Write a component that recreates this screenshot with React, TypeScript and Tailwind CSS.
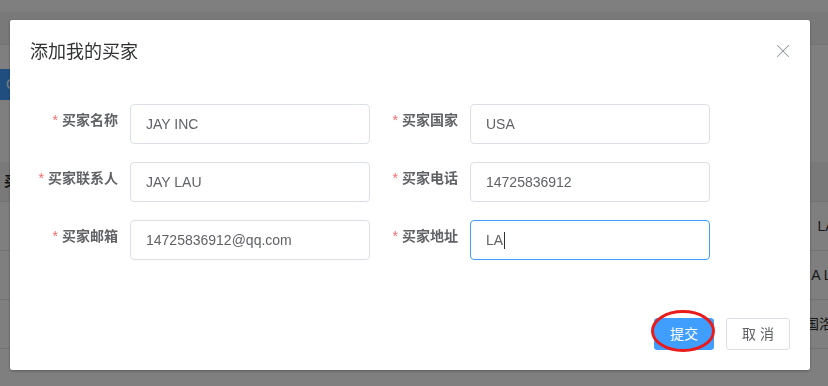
import { X } from 'lucide-react';

const font = { fontFamily: '"Liberation Sans", "Noto Sans CJK SC", sans-serif' };

export default function App() {
  const fields = [
    { label: '买家名称', value: 'JAY INC' },
    { label: '买家国家', value: 'USA' },
    { label: '买家联系人', value: 'JAY LAU' },
    { label: '买家电话', value: '14725836912' },
    { label: '买家邮箱', value: '14725836912@qq.com' },
    { label: '买家地址', value: 'LA', focused: true },
  ];

  const rows = ['LA', 'A LA', '美国洛杉矶'];

  return (
    <div className="relative min-h-screen w-full overflow-hidden bg-white text-[14px] text-[#303133]" style={font}>
      {/* page behind the dialog */}
      <div className="h-[12px] bg-white" />
      <div className="h-[33px] border-b border-[#e4e4e4] bg-[#f3f3f3]" />
      <div className="pt-[24px]">
        <div className="flex h-[31px] w-[80px] items-center rounded-r-[3px] bg-[#409eff] pl-[6px] text-white">Create</div>
      </div>
      <div className="mt-[62px]">
        <div className="flex h-[40px] items-center border-b border-[#e4e4e4] bg-[#f3f3f3] pl-[4px] font-bold text-[#222]">
          <span>买家</span>
        </div>
        {rows.map((r, i) => (
          <div key={i} className="flex h-[49px] items-center border-b border-[#e4e4e4] pl-[4px]">
            <span className="w-[782px] shrink-0" />
            <span className="w-[80px] shrink-0 whitespace-nowrap text-center">{r}</span>
          </div>
        ))}
      </div>

      {/* overlay */}
      <div className="fixed inset-0 bg-black/50" />

      {/* dialog */}
      <div className="fixed left-[10px] top-[20px] w-[800px] rounded-[2px] bg-white shadow-[0_1px_3px_rgba(0,0,0,0.3)]">
        <div className="relative px-5 pb-[10px] pt-5">
          <span className="text-[18px] leading-6 text-[#303133]">添加我的买家</span>
          <button className="absolute right-[16px] top-[20px] flex h-[22px] w-[22px] items-center justify-center text-[#909399]">
            <X className="h-[22px] w-[22px]" strokeWidth={1.1} />
          </button>
        </div>

        <div className="px-5 pb-[30px] pt-[30px]">
          <div className="grid grid-cols-[340px_340px]">
            {fields.map((f) => (
              <div key={f.label} className="mb-[18px] flex">
                <label className="w-[100px] shrink-0 whitespace-nowrap pr-3 text-right font-bold leading-[32px] text-[#606266]">
                  <span className="mr-1 font-normal text-[#f56c6c]">*</span>
                  {f.label}
                </label>
                <div
                  className={
                    f.focused
                      ? 'flex h-[40px] w-[240px] items-center rounded-[4px] border border-[#409eff] px-[15px] text-[#606266]'
                      : 'flex h-[40px] w-[240px] items-center rounded-[4px] border border-[#dcdfe6] px-[15px] text-[#606266]'
                  }
                >
                  {f.value}
                  {f.focused && <span className="ml-px h-[17px] w-px bg-[#303133]" />}
                </div>
              </div>
            ))}
          </div>
        </div>

        <div className="flex justify-end gap-3 px-5 pb-5 pt-[10px]">
          <div className="relative">
            <button className="h-[32px] rounded-[3px] border border-[#409eff] bg-[#409eff] px-[15px] text-[14px] text-white">提交</button>
            <svg className="pointer-events-none absolute -left-[3px] -top-[8px]" width="64" height="42" viewBox="0 0 64 42">
              <ellipse cx="32" cy="21" rx="30.5" ry="19.5" fill="none" stroke="#ea1b1b" strokeWidth="3" />
            </svg>
          </div>
          <button className="h-[32px] rounded-[3px] border border-[#dcdfe6] bg-white px-[15px] text-[14px] text-[#606266]">取 消</button>
        </div>
      </div>
    </div>
  );
}
